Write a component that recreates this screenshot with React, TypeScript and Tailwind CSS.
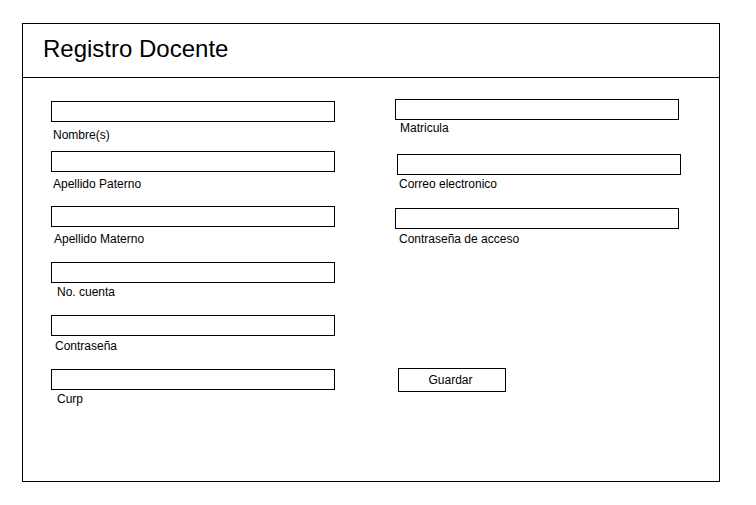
type Field = {
  label: string;
  box: string;
  text: string;
};

const left: Field[] = [
  { label: "Nombre(s)", box: "mt-[23px]", text: "mt-[6px] ml-[2px]" },
  { label: "Apellido Paterno", box: "mt-[9px]", text: "mt-[5px] ml-[2px]" },
  { label: "Apellido Materno", box: "mt-[15px]", text: "mt-[5px] ml-[3px]" },
  { label: "No. cuenta", box: "mt-[16px]", text: "mt-[2px] ml-[6px]" },
  { label: "Contraseña", box: "mt-[16px]", text: "mt-[3px] ml-[4px]" },
  { label: "Curp", box: "mt-[16px]", text: "mt-[2px] ml-[6px]" },
];

const right: Field[] = [
  { label: "Matricula", box: "mt-[21px]", text: "mt-[1px] ml-[5px]" },
  { label: "Correo electronico", box: "mt-[19px] ml-[2px]", text: "mt-[2px] ml-[4px]" },
  { label: "Contraseña de acceso", box: "mt-[17px]", text: "mt-[3px] ml-[4px]" },
];

function FormField({ field }: { field: Field }) {
  return (
    <>
      <input
        type="text"
        className={`${field.box} block w-[284px] h-[21px] border border-black bg-white outline-none`}
      />
      <label className={`${field.text} block text-[12px] leading-[14px] text-black`}>
        {field.label}
      </label>
    </>
  );
}

export default function App() {
  return (
    <div className="w-[756px] h-[505px] bg-white pt-[23px] pl-[22px] font-['Liberation_Sans',Arial,sans-serif] text-black">
      <div className="w-[698px] h-[459px] border border-black">
        {/* Header */}
        <div className="h-[54px] border-b border-black pt-[11px] pl-[20px]">
          <h1 className="text-[24px] leading-[28px]">Registro Docente</h1>
        </div>

        {/* Form */}
        <div className="flex">
          <div className="flex flex-col ml-[28px]">
            {left.map((f) => (
              <FormField key={f.label} field={f} />
            ))}
          </div>
          <div className="flex flex-col ml-[60px]">
            {right.map((f) => (
              <FormField key={f.label} field={f} />
            ))}
            <button className="mt-[122px] ml-[3px] w-[108px] h-[24px] border border-black bg-white text-[12px] leading-[14px] text-black pr-[3px]">
              Guardar
            </button>
          </div>
        </div>
      </div>
    </div>
  );
}
